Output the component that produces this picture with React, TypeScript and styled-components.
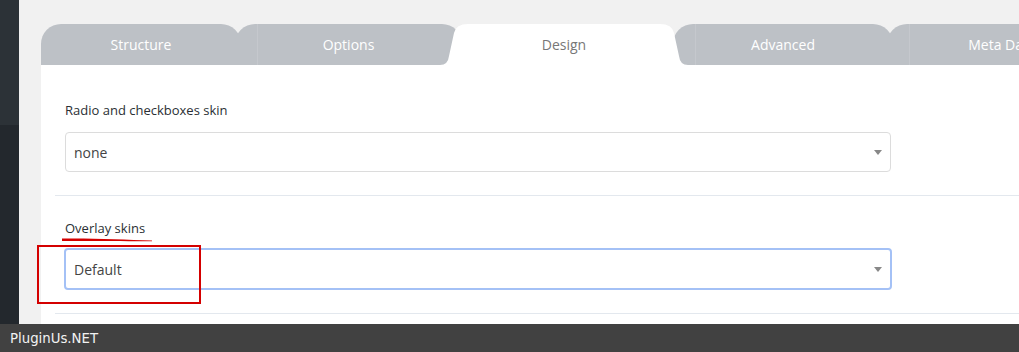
import styled, { createGlobalStyle } from 'styled-components';

const GlobalStyle = createGlobalStyle`
  html, body {
    margin: 0;
    padding: 0;
    background: #f1f1f1;
    overflow: hidden;
  }
  #root {
    width: 1019px;
    height: 352px;
  }
`

type TabDef = { label: string; width: number; shift: number; active?: boolean }

const tabs: TabDef[] = [
    { label: 'Structure', width: 200, shift: 0 },
    { label: 'Options', width: 227, shift: -6 },
    { label: 'Design', width: 248, shift: -22, active: true },
    { label: 'Advanced', width: 220, shift: -15 },
    { label: 'Meta Data', width: 230, shift: -6 },
]

export default function App() {
    return (
        <Screen>
            <GlobalStyle />
            <Main>
                <Sidebar />
                <Content>
                    <TabStrip>
                        {tabs.map((t, i) =>
                            t.active ? (
                                <ActiveTab key={t.label} $width={t.width} $shift={t.shift}>
                                    {t.label}
                                </ActiveTab>
                            ) : (
                                <Tab key={t.label} $width={t.width} $shift={t.shift} $first={i === 0}>
                                    {t.label}
                                </Tab>
                            )
                        )}
                    </TabStrip>
                    <Panel>
                        <Row>
                            <Label>Radio and checkboxes skin</Label>
                            <Select>none</Select>
                        </Row>
                        <Row>
                            <Label>Overlay skins</Label>
                            <Select $focused>Default</Select>
                        </Row>
                    </Panel>
                </Content>
            </Main>
            <BottomBar>PluginUs.NET</BottomBar>
            <Annotations width="1019" height="352" viewBox="0 0 1019 352">
                <path d="M62 238.5 C 90 238, 125 239.5, 152 240.5 L 152 241.3 C 125 241, 90 240.8, 62 241 Z" fill="#d40000" />
                <rect x="38" y="246" width="162" height="57" fill="none" stroke="#d40000" strokeWidth="2" />
            </Annotations>
        </Screen>
    )
}

const Screen = styled.div`
position: relative;
width: 1019px;
height: 352px;
display: flex;
flex-direction: column;
overflow: hidden;
font-family: "Open Sans", "Liberation Sans", sans-serif;
`

const Main = styled.div`
display: flex;
height: 324px;
`

const Sidebar = styled.div`
flex: 0 0 19px;
background: linear-gradient(#2c3237 0 125px, #23282d 125px);
`

const Content = styled.div`
flex: 1;
min-width: 0;
padding: 24px 0 0 22px;
display: flex;
flex-direction: column;
`

const TabStrip = styled.div`
display: flex;
height: 41px;
`

const Tab = styled.div<{ $width: number; $shift: number; $first?: boolean }>`
position: relative;
flex: 0 0 ${p => p.$width}px;
margin-left: ${p => p.$shift}px;
height: 41px;
background: #bdc1c6;
border-radius: 20px 20px 0 0;
color: #fff;
font-size: 14px;
display: flex;
align-items: center;
justify-content: center;
&::before {
  content: '';
  display: ${p => (p.$first ? 'none' : 'block')};
  position: absolute;
  left: 22px;
  top: 0;
  bottom: 0;
  width: 1px;
  background: rgba(255, 255, 255, 0.12);
}
`

const ActiveTab = styled.div<{ $width: number; $shift: number }>`
position: relative;
z-index: 2;
flex: 0 0 ${p => p.$width}px;
margin-left: ${p => p.$shift}px;
height: 41px;
background: #fff;
clip-path: path('M0 41 Q8 41 9 32 L14 9 Q16 0 28 0 L220 0 Q232 0 234 9 L239 32 Q240 41 248 41 Z');
color: #777;
font-size: 14px;
display: flex;
align-items: center;
justify-content: center;
`

const Panel = styled.div`
flex: 1;
background: #fff;
padding: 13px 0 0 14px;
`

const Row = styled.div`
padding: 23px 0 23px 10px;
border-bottom: 1px solid #e3e8ee;
`

const Label = styled.div`
font-size: 13px;
line-height: 18px;
font-weight: 400;
color: #2a2f34;
`

const Select = styled.div<{ $focused?: boolean }>`
position: relative;
box-sizing: border-box;
width: ${p => (p.$focused ? 828 : 826)}px;
height: ${p => (p.$focused ? 42 : 40)}px;
margin-top: ${p => (p.$focused ? 11 : 13)}px;
margin-left: ${p => (p.$focused ? -1 : 0)}px;
border: ${p => (p.$focused ? '2px solid #a4c1f6' : '1px solid #dcdcdc')};
border-radius: 4px;
padding-left: 8px;
display: flex;
align-items: center;
font-size: 14px;
color: #444;
&::after {
  content: '';
  position: absolute;
  right: 8px;
  top: 50%;
  margin-top: -2px;
  border-left: 4px solid transparent;
  border-right: 4px solid transparent;
  border-top: 5px solid #888;
}
`

const BottomBar = styled.div`
height: 28px;
background: #414141;
color: #f2f2f2;
font-family: "DejaVu Sans", Verdana, sans-serif;
font-size: 13.3px;
display: flex;
align-items: center;
padding-left: 10px;
`

const Annotations = styled.svg`
position: absolute;
left: 0;
top: 0;
pointer-events: none;
`
